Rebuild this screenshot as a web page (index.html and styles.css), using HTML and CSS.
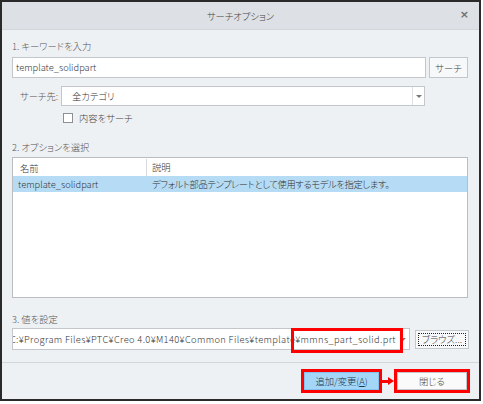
FILE: index.html
```html
<!DOCTYPE html>
<html lang="ja">
<head>
<meta charset="utf-8">
<title>サーチオプション</title>
<link rel="stylesheet" href="styles.css">
</head>
<body>
<div class="dialog">
  <div class="titlebar">
    <span class="title">サーチオプション</span>
    <span class="close">×</span>
  </div>
  <div class="content">
    <div class="label first">1. キーワードを入力</div>
    <div class="row keyword-row">
      <div class="textbox">template_solidpart</div>
      <div class="btn search-btn">サーチ</div>
    </div>
    <div class="row scope-row">
      <span class="scope-label">サーチ先:</span>
      <div class="select">
        <span class="select-text">全カテゴリ</span>
        <span class="select-arrow"><span class="tri"></span></span>
      </div>
    </div>
    <div class="row check-row">
      <span class="checkbox"></span>
      <span class="check-label">内容をサーチ</span>
    </div>
    <div class="label second">2. オプションを選択</div>
    <div class="table">
      <div class="trow head">
        <div class="cell c1">名前</div>
        <div class="cell c2">説明</div>
      </div>
      <div class="trow selected">
        <div class="cell c1">template_solidpart</div>
        <div class="cell c2 desc">デフォルト部品テンプレートとして使用するモデルを指定します。</div>
      </div>
    </div>
    <div class="label third">3. 値を設定</div>
    <div class="row value-row">
      <div class="combo">
        <div class="combo-text"><span>C:¥Program Files¥PTC¥Creo 4.0¥M140¥Common Files¥template¥mmns_part_solid.prt</span></div>
        <span class="combo-arrow"><span class="tri"></span></span>
        <div class="mark mark-value"></div>
      </div>
      <div class="btn browse-btn"><span class="focus">ブラウズ...</span></div>
    </div>
  </div>
  <div class="footer">
    <div class="redbox add-box"><div class="btn add-btn">追加/変更(<u>A</u>)</div></div>
    <div class="red-arrow"><span class="line"></span><span class="head"></span></div>
    <div class="redbox close-box"><div class="btn close-btn">閉じる</div></div>
  </div>
</div>
</body>
</html>
```

FILE: styles.css
```css
* { box-sizing: border-box; }
html, body { margin: 0; padding: 0; background: #ffffff; }
body {
  font-family: "Noto Sans CJK JP", "Noto Sans", sans-serif;
  font-size: 9.3px;
  font-weight: 300;
  font-feature-settings: "palt";
  color: #4a4a4a;
  white-space: nowrap;
}
.dialog {
  width: 481px;
  height: 401px;
  border: 2px solid #2a2a2a;
  background: #eef1f4;
  display: flex;
  flex-direction: column;
}
.titlebar {
  height: 28px;
  background: #dde0e4;
  display: flex;
  align-items: center;
  justify-content: center;
  position: relative;
  border-bottom: 1px solid #d3d6da;
}
.title { color: #444; }
.close {
  position: absolute;
  right: 10px;
  top: 7px;
  font-family: "DejaVu Sans", sans-serif;
  font-size: 11px;
  font-weight: bold;
  color: #707070;
  line-height: 12px;
}
.content {
  padding: 0 10px 0 10px;
  display: flex;
  flex-direction: column;
}
.label { line-height: 16px; height: 16px; color: #555; }
.label.first { margin-top: 8px; }
.label.second { margin-top: 14px; }
.label.third { margin-top: 13px; }
.row { display: flex; align-items: center; }
.keyword-row { margin-top: 3px; height: 21px; }
.textbox {
  width: 414px;
  height: 21px;
  background: #fff;
  border: 1px solid #c3c6ca;
  line-height: 19px;
  padding-left: 3px;
  color: #333;
}
.btn {
  background: #f7f8f9;
  border: 1px solid #c3c6ca;
  display: flex;
  align-items: center;
  justify-content: center;
  color: #444;
}
.search-btn { width: 39px; height: 21px; margin-left: 3px; }
.scope-row { margin-top: 8px; height: 20px; }
.scope-label { width: 49px; padding-left: 8px; color: #555; }
.select {
  width: 364px;
  height: 20px;
  background: #fff;
  border: 1px solid #c3c6ca;
  display: flex;
  align-items: center;
}
.select-text { flex: 1; padding-left: 10px; color: #333; }
.select-arrow {
  width: 12px;
  height: 100%;
  border-left: 1px solid #dde0e3;
  display: flex;
  align-items: center;
  justify-content: center;
}
.tri {
  width: 0; height: 0;
  border-left: 3px solid transparent;
  border-right: 3px solid transparent;
  border-top: 3px solid #777;
}
.check-row { margin-top: 5px; height: 14px; padding-left: 51px; }
.checkbox {
  width: 10px; height: 10px;
  border: 1px solid #8d9196;
  background: #fff;
}
.check-label { margin-left: 6px; color: #444; }
.table {
  margin-top: 2px;
  width: 456px;
  height: 141px;
  background: #fff;
  border: 1px solid #b9bcc0;
  padding-top: 1px;
}
.trow { display: flex; height: 17px; align-items: center; }
.trow.head { height: 17px; }
.trow.selected { background: #b6dcf5; height: 16px; }
.cell { padding-left: 5px; color: #333; }
.c1 { width: 133px; }
.head .c2 { border-left: 1px solid #d8dadd; height: 17px; line-height: 17px; }
.head .c1 { padding-left: 7px; }
.selected .c2 { padding-left: 6px; }
.desc { letter-spacing: -0.4px; }
.value-row { margin-top: 1px; height: 22px; }
.combo {
  position: relative;
  width: 398px;
  height: 22px;
  background: #fff;
  border: 1px solid #c3c6ca;
  display: flex;
  align-items: center;
}
.combo-text {
  flex: 1;
  overflow: hidden;
  display: flex;
  justify-content: flex-end;
  color: #333;
  padding-right: 1px;
  letter-spacing: 0.35px;
}
.combo-arrow {
  width: 12px;
  display: flex;
  justify-content: center;
  align-items: center;
}
.mark {
  position: absolute;
  border: 3px solid #ff0000;
}
.mark-value { left: 278px; top: -1px; width: 112px; height: 25px; }
.browse-btn {
  margin-left: 5px;
  width: 54px;
  height: 19px;
  padding: 2px;
}
.browse-btn .focus {
  width: 100%;
  height: 100%;
  border: 1px dotted #222;
  display: flex;
  align-items: center;
  justify-content: center;
}
.footer {
  margin-top: auto;
  height: 37px;
  border-top: 1px solid #d2d5d9;
  display: flex;
  align-items: center;
  justify-content: flex-end;
  padding-right: 9px;
}
.redbox {
  border: 3px solid #ff0000;
  height: 24px;
  display: flex;
}
.add-box { width: 81px; }
.close-box { width: 76px; }
.add-btn {
  flex: 1;
  background: #a3d6f7;
  border: 1px solid #84c2ec;
  color: #1d3347;
}
.close-btn {
  flex: 1;
  background: #fafafa;
  border: 1px solid #c3c6ca;
}
.red-arrow { width: 12px; display: flex; align-items: center; }
.red-arrow .line { flex: 1; height: 3px; background: #ff0000; }
.red-arrow .head {
  width: 0; height: 0;
  border-top: 4px solid transparent;
  border-bottom: 4px solid transparent;
  border-left: 6px solid #ff0000;
}
```
